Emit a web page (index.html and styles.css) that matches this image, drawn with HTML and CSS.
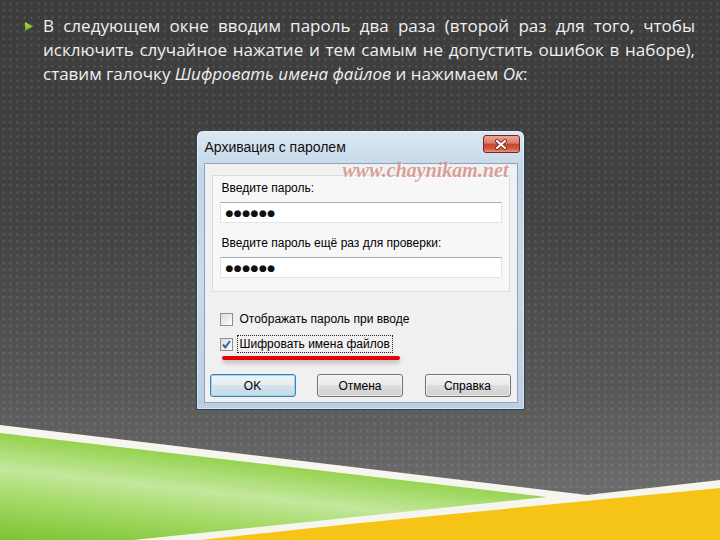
FILE: index.html
```html
<!DOCTYPE html>
<html lang="ru">
<head>
  <meta charset="UTF-8">
  <title>Архивация с паролем</title>
  <link rel="stylesheet" href="styles.css">
</head>
<body>
  <div class="slide">
    <div class="point">
      <span class="bullet"></span>
      <p class="point-text">
        <span class="line line-full">В следующем окне вводим пароль два раза (второй раз для того, чтобы</span>
        <span class="line line-full">исключить случайное нажатие и тем самым не допустить ошибок в наборе),</span>
        <span class="line">ставим галочку <em>Шифровать имена файлов</em> и нажимаем <em>Ок</em>:</span>
      </p>
    </div>

    <div class="window">
      <div class="titlebar">
        <span class="title">Архивация с паролем</span>
        <span class="close-btn">
          <svg width="14" height="11" viewBox="0 0 14 11">
            <path d="M3 2 L11 9 M11 2 L3 9" stroke="#7a2a22" stroke-width="4" stroke-linecap="round"/>
            <path d="M3 2 L11 9 M11 2 L3 9" stroke="#ffffff" stroke-width="2.2" stroke-linecap="round"/>
          </svg>
        </span>
      </div>
      <div class="watermark">www.chaynikam.net</div>

      <div class="client">
        <div class="panel">
          <div class="label">Введите пароль:</div>
          <div class="field">●●●●●●</div>
          <div class="label label-second">Введите пароль ещё раз для проверки:</div>
          <div class="field">●●●●●●</div>
        </div>

        <div class="check-row">
          <span class="checkbox"></span>
          <span class="check-label">Отображать пароль при вводе</span>
        </div>
        <div class="check-row check-row-second">
          <span class="checkbox">
            <svg width="11" height="11" viewBox="0 0 11 11">
              <path d="M2 5.5 L4.3 8.3 L9 2" fill="none" stroke="#3a5fae" stroke-width="2"/>
            </svg>
          </span>
          <span class="check-label focused">Шифровать имена файлов</span>
        </div>
        <div class="red-mark"></div>

        <div class="buttons">
          <span class="btn btn-default">OK</span>
          <span class="btn">Отмена</span>
          <span class="btn">Справка</span>
        </div>
      </div>
    </div>

    <!-- decorative stripes at the bottom of the slide -->
    <svg class="waves" width="720" height="120" viewBox="0 0 720 120">
      <defs>
        <linearGradient id="green" gradientUnits="userSpaceOnUse" x1="0" y1="10" x2="-12" y2="118">
          <stop offset="0" stop-color="#8fd146"/>
          <stop offset="0.35" stop-color="#c3e79c"/>
          <stop offset="0.6" stop-color="#a6db69"/>
          <stop offset="1" stop-color="#7bc433"/>
        </linearGradient>
        <linearGradient id="yellow" gradientUnits="userSpaceOnUse" x1="0" y1="70" x2="8" y2="120">
          <stop offset="0" stop-color="#f6c722"/>
          <stop offset="0.25" stop-color="#fbe07a"/>
          <stop offset="0.55" stop-color="#f7c928"/>
          <stop offset="1" stop-color="#f5c416"/>
        </linearGradient>
      </defs>
      <polygon points="0,5 587,75 720,60 720,120 0,120" fill="#f6f6ee"/>
      <polygon points="0,13 547,77 133,120 0,120" fill="url(#green)"/>
      <polygon points="200,120 360,103 720,68 720,120" fill="url(#yellow)"/>
    </svg>
  </div>
</body>
</html>
```

FILE: styles.css
```css
* {
  box-sizing: border-box;
}

body {
  margin: 0;
  width: 720px;
  height: 540px;
  overflow: hidden;
  font-family: "Open Sans", sans-serif;
}

.slide {
  position: relative;
  width: 720px;
  height: 540px;
  background-color: #444;
  background-image:
    radial-gradient(circle, rgba(255,255,255,0.09) 1px, transparent 1.6px),
    linear-gradient(#3c3c3c 0%, #424242 40%, #575757 72%, #6b6b6b 90%);
  background-size: 7px 7px, 100% 100%;
}

/* bullet text */
.point {
  display: flex;
  gap: 10px;
  padding: 14px 25px 0 25px;
}

.bullet {
  flex: none;
  width: 8px;
  height: 9px;
  margin-top: 8px;
  clip-path: polygon(0 0, 100% 50%, 0 100%);
  background: linear-gradient(#c8dc3c, #5aa82c);
}

.point-text {
  flex: 1;
  margin: 0;
  font-size: 17px;
  line-height: 24px;
  color: #f0f0f0;
}

.line {
  display: block;
}

.line-full {
  text-align: justify;
  text-align-last: justify;
}

/* dialog window */
.window {
  position: relative;
  width: 329px;
  margin: 44px auto 0;
  padding: 0 6px 6px 7px;
  border: 1px solid #2f4255;
  border-radius: 7px 7px 2px 2px;
  background: linear-gradient(#dce8f3, #c2d6e7 15%, #c9dbea 55%, #bacfe1);
  box-shadow: inset 0 0 0 1px rgba(255,255,255,0.45);
}

.titlebar {
  height: 32px;
  display: flex;
  justify-content: space-between;
  align-items: center;
  padding-left: 1px;
}

.title {
  font-family: "Liberation Sans", sans-serif;
  font-size: 14px;
  color: #111;
}

.close-btn {
  align-self: flex-start;
  width: 37px;
  height: 18px;
  margin: 4px -2px 0 0;
  display: flex;
  align-items: center;
  justify-content: center;
  border: 1px solid #6d2b22;
  border-radius: 3px;
  background: linear-gradient(#eba594 0%, #dc7b66 45%, #c8452e 50%, #d35a40 80%, #e69a7c 100%);
}

.watermark {
  position: absolute;
  left: 146px;
  top: 28px;
  font-family: "Liberation Serif", serif;
  font-style: italic;
  font-weight: bold;
  font-size: 20px;
  color: rgba(204, 120, 108, 0.7);
  text-shadow: 1px 1px 0 rgba(255,255,255,0.8);
}

.client {
  background: #f0f0f0;
  border: 1px solid #8ea3b8;
  padding: 11px 0 5px;
  font-family: "Liberation Sans", sans-serif;
  font-size: 12px;
  color: #000;
}

.panel {
  margin: 0 7px;
  padding: 4px 7px 13px 7px;
  border: 1px solid #dcdcdc;
  background: #f7f7f7;
}

.label {
  line-height: 16px;
  padding-left: 2px;
}

.label-second {
  margin-top: 12px;
}

.field {
  height: 21px;
  margin-top: 6px;
  padding-left: 5px;
  display: flex;
  align-items: center;
  border: 1px solid #e2e3ea;
  border-top-color: #abadb3;
  background: #fff;
  font-family: "DejaVu Sans", sans-serif;
  font-size: 9px;
  letter-spacing: 0.5px;
  color: #111;
}

.check-row {
  height: 18px;
  margin-top: 18px;
  padding-left: 15px;
  display: flex;
  align-items: center;
}

.check-row-second {
  margin-top: 7px;
}

.checkbox {
  width: 13px;
  height: 13px;
  display: flex;
  align-items: center;
  justify-content: center;
  border: 1px solid #8e8f8f;
  background: linear-gradient(135deg, #dcdcdc, #fdfdfd);
}

.check-label {
  margin-left: 4px;
  padding: 0 2px;
  line-height: 16px;
  border: 1px dotted transparent;
}

.focused {
  border-color: #222;
}

.red-mark {
  width: 178px;
  height: 4px;
  margin: 3px 0 0 17px;
  border-radius: 2px;
  background: #e6000a;
  box-shadow: 0 3px 4px rgba(0,0,0,0.25);
}

.buttons {
  margin-top: 14px;
  padding: 0 6px 0 5px;
  display: flex;
  justify-content: space-between;
}

.btn {
  width: 86px;
  height: 23px;
  display: flex;
  align-items: center;
  justify-content: center;
  border: 1px solid #707070;
  border-radius: 3px;
  background: linear-gradient(#f2f2f2 0%, #ebebeb 50%, #dddddd 50%, #cfcfcf 100%);
  box-shadow: inset 0 0 0 1px rgba(255,255,255,0.6);
}

.btn-default {
  border-color: #3c7fb1;
  background: linear-gradient(#eef5f9 0%, #e2edf3 50%, #d3e3ec 50%, #c6dbe6 100%);
  box-shadow: inset 0 0 0 1px #9fd6ef;
}

.waves {
  position: absolute;
  left: 0;
  bottom: 0;
}
```
